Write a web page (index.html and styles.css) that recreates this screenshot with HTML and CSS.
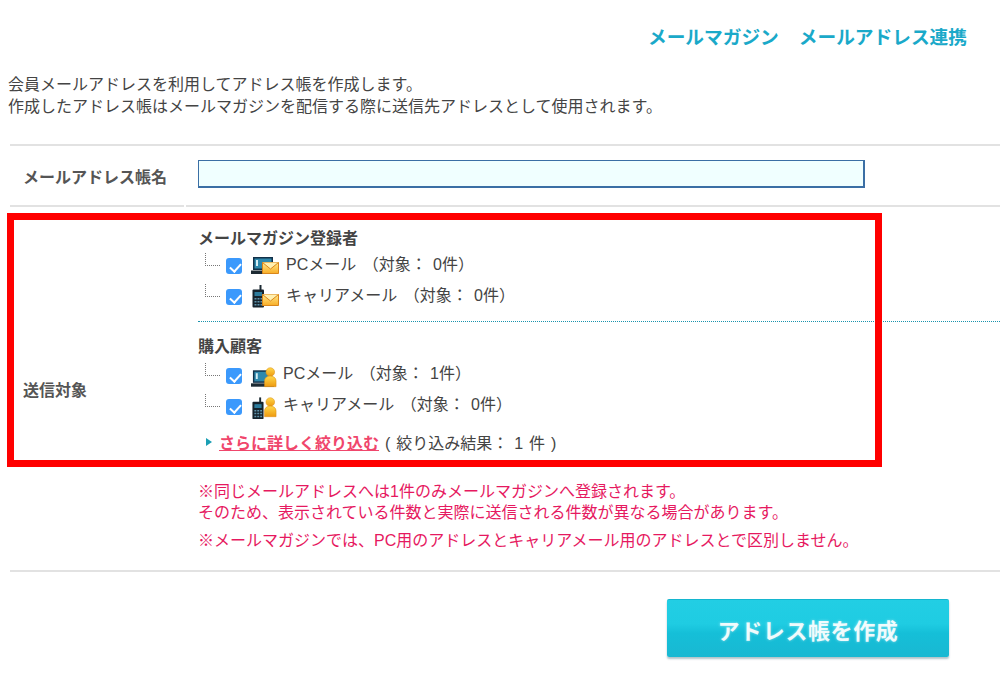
FILE: index.html
```html
<!DOCTYPE html>
<html lang="ja">
<head>
<meta charset="utf-8">
<title>アドレス帳を作成</title>
<link rel="stylesheet" href="styles.css">
</head>
<body>
<svg class="defs" width="0" height="0" aria-hidden="true">
  <defs>
    <linearGradient id="gEnv" x1="0" y1="0" x2="0" y2="1"><stop offset="0" stop-color="#ffe98c"/><stop offset="1" stop-color="#f8ad26"/></linearGradient>
    <linearGradient id="gMan" x1="0" y1="0" x2="0" y2="1"><stop offset="0" stop-color="#ffd84a"/><stop offset="1" stop-color="#ee9a10"/></linearGradient>
    <symbol id="laptop" viewBox="0 0 28 23">
      <path d="M2 3h20v13H2z" fill="#123049"/>
      <path d="M3.500 4.500h17v10h-17z" fill="#2f89ad"/>
      <path d="M5 6h2v6H5z" fill="#d5eef6"/>
      <path d="M0 16.500h24V20H0z" fill="#1d2a33"/>
    </symbol>
    <symbol id="phone" viewBox="0 0 28 23">
      <path d="M8.500 0h2v5h-2z" fill="#1c2a33"/>
      <rect x="1.500" y="4.500" width="11.500" height="18" rx="1" fill="#16232c"/>
      <path d="M3.500 7h7.500v4H3.500z" fill="#2d7c9d"/>
      <path d="M3.500 13h2v1.500h-2zM6.500 13h2v1.500h-2zM9.500 13h2v1.500h-2zM3.500 16h2v1.500h-2zM6.500 16h2v1.500h-2zM9.500 16h2v1.500h-2zM3.500 19h2v1.500h-2zM6.500 19h2v1.500h-2zM9.500 19h2v1.500h-2z" fill="#5f93ab"/>
    </symbol>
    <symbol id="env" viewBox="0 0 28 23">
      <path d="M11.500 8.500h16v11h-16z" fill="url(#gEnv)" stroke="#d9861b"/>
      <path d="M11.500 8.500l8 6.500 8-6.500" fill="#fff0b0" stroke="#d9861b"/>
    </symbol>
    <symbol id="man" viewBox="0 0 28 23">
      <circle cx="20" cy="4.800" r="4.500" fill="url(#gMan)" stroke="#d98a12" stroke-width=".5"/>
      <path d="M14 20v-6c0-3 2.500-5 6-5s6 2 6 5v6z" fill="url(#gMan)" stroke="#d98a12" stroke-width=".5"/>
    </symbol>
  </defs>
</svg>

<nav class="topnav">
  <a href="#">メールマガジン</a>
  <a href="#">メールアドレス連携</a>
</nav>

<p class="intro">会員メールアドレスを利用してアドレス帳を作成します。<br>作成したアドレス帳はメールマガジンを配信する際に送信先アドレスとして使用されます。</p>

<div class="form">
  <div class="row row-name">
    <div class="label">メールアドレス帳名</div>
    <div class="field"><input class="text" type="text"></div>
  </div>
  <div class="row row-target">
    <div class="label">送信対象</div>
    <div class="field">
      <div class="group group-first">
        <h3>メールマガジン登録者</h3>
        <label class="opt"><span class="tree"></span><input type="checkbox" checked><svg class="ico"><use href="#laptop"/><use href="#env"/></svg><span class="opt-text">PCメール （対象： 0件）</span></label>
        <label class="opt"><span class="tree"></span><input type="checkbox" checked><svg class="ico"><use href="#phone"/><use href="#env" y="1"/></svg><span class="opt-text">キャリアメール （対象： 0件）</span></label>
      </div>
      <div class="group group-second">
        <h3>購入顧客</h3>
        <label class="opt"><span class="tree"></span><input type="checkbox" checked><svg class="ico ico-b"><use href="#laptop" y="1"/><use href="#man" y="1"/></svg><span class="opt-text">PCメール （対象： 1件）</span></label>
        <label class="opt"><span class="tree"></span><input type="checkbox" checked><svg class="ico ico-b"><use href="#phone"/><use href="#man"/></svg><span class="opt-text">キャリアメール （対象： 0件）</span></label>
        <div class="refine"><span class="arrow"></span><a href="#">さらに詳しく絞り込む</a><span class="result">( 絞り込み結果： 1 件 )</span></div>
      </div>
      <div class="notes">
        <p>※同じメールアドレスへは1件のみメールマガジンへ登録されます。<br>そのため、表示されている件数と実際に送信される件数が異なる場合があります。</p>
        <p>※メールマガジンでは、PC用のアドレスとキャリアメール用のアドレスとで区別しません。</p>
      </div>
    </div>
  </div>
  <div class="highlight"></div>
</div>

<div class="actions"><button type="button" class="submit">アドレス帳を作成</button></div>
</body>
</html>
```
FILE: styles.css
```css
* { box-sizing: border-box; }
html, body { margin: 0; padding: 0; }
body {
  width: 1000px;
  height: 697px;
  overflow: hidden;
  background: #fff;
  color: #444;
  font-family: "Liberation Sans", "Noto Sans CJK JP", sans-serif;
  font-size: 16px;
}
.defs { position: absolute; }
.topnav {
  display: flex;
  justify-content: flex-end;
  gap: 20px;
  height: 74px;
  padding: 25px 33px 0 0;
  font-size: 18.700px;
  line-height: 26px;
  font-weight: 700;
}
.topnav a { color: #1aa9c9; text-decoration: none; }
.intro {
  margin: 0 0 26px;
  padding-left: 8px;
  height: 44px;
  font-size: 16px;
  line-height: 22px;
  color: #444;
}
.form { position: relative; margin-left: 10px; }
.row { display: flex; }
.label {
  flex: 0 0 174px;
  display: flex;
  align-items: center;
  padding-left: 13px;
  margin-right: 2px;
  font-size: 16px;
  font-weight: 700;
  color: #555;
  border-top: 2px solid #e2e2e2;
}
.field { flex: 1; padding-left: 12px; border-top: 2px solid #e2e2e2; }
.row-name { height: 61px; border-top: 2px solid #e2e2e2; }
.row-name .label, .row-name .field { border-top: 0; }
.row-name .field { padding-top: 14px; }
.text {
  display: block;
  width: 667px;
  height: 28px;
  border: 2px solid #3b6fa5;
  border-width: 1px 2px 2px 1px;
  background: #f0ffff;
  margin: 0;
}
.row-target {
  height: 367px;
  border-bottom: 2px solid #e2e2e2;
}
.group-first { height: 115px; padding-top: 22px; border-bottom: 1px dotted #1a93ad; }
.group-second { padding-top: 15px; height: 134px; }
.group-second h3 { margin-bottom: 1px; }
.group h3 {
  font-size: 16px;
  line-height: 20px;
  font-weight: 700;
  color: #444;
  margin-top: 0;
}
.group-first h3 { margin-bottom: -1px; }
.opt { display: flex; align-items: flex-start; height: 31px; font-size: 16px; line-height: 22px; word-spacing: 2px; }
.tree {
  flex: none;
  width: 15px;
  height: 13px;
  margin: 5px 6px 0 7px;
  border-left: 1px dotted #777;
  border-bottom: 1px dotted #777;
}
.opt input {
  appearance: none;
  -webkit-appearance: none;
  flex: none;
  position: relative;
  width: 16px;
  height: 16px;
  margin: 10px 9px 0 0;
  border-radius: 3px;
  background: #3b99fc;
}
.opt input::after {
  content: "";
  position: absolute;
  left: 5.500px;
  top: 2.500px;
  width: 5px;
  height: 9px;
  border: solid #fff;
  border-width: 0 2px 2px 0;
  transform: rotate(42deg);
}
.ico { flex: none; width: 28px; height: 23px; margin: 6px 7px 0 0; }
.ico-b { width: 27px; height: 23px; margin: 8px 5px 0 0; }
.opt-text { margin-top: 5px; }
.group-first .opt-text { margin-top: 6px; }
.refine { display: flex; align-items: center; height: 24px; margin-top: 10px; padding-left: 8px; font-size: 16px; }
.arrow { flex: none; width: 0; height: 0; margin-right: 7px; border-left: 6px solid #1a9fb4; border-top: 4px solid transparent; border-bottom: 4px solid transparent; }
.refine a { color: #f0466c; font-weight: 700; }
.result { margin-left: 6px; word-spacing: 1.500px; }
.notes { color: #e6195f; font-size: 16px; line-height: 21px; padding-top: 25px; }
.notes p { margin: 0 0 7px; }
.highlight {
  position: absolute;
  left: -3px;
  top: 69px;
  width: 875px;
  height: 254px;
  border: 7px solid #f00;
  pointer-events: none;
}
.actions { display: flex; justify-content: flex-end; padding: 27px 51px 0 0; }
.submit {
  width: 282px;
  height: 58px;
  border: 0;
  border-top: 1px solid #14b6cf;
  border-radius: 2px;
  background: linear-gradient(#22cee4 0%, #1fcce2 42%, #15bfd8 58%, #19b8d2 100%);
  box-shadow: 0 2px 2px rgba(0, 60, 80, 0.3);
  color: rgba(255,255,255,.92);
  font-family: inherit;
  font-size: 22px;
  font-weight: 700;
  letter-spacing: .6px;
  text-shadow: 0 0 3px rgba(255,255,255,.5);
}
```
